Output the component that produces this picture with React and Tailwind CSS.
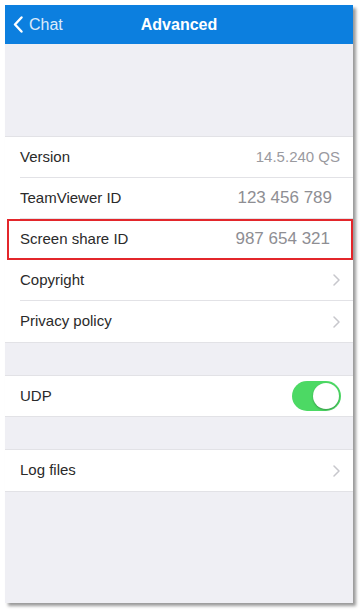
import React from 'react'

function Chevron() {
    return (
        <svg width="7" height="12" viewBox="0 0 7 12" className="shrink-0">
            <polyline points="1,1 6,6 1,11" fill="none" stroke="#c7c7cc" strokeWidth="1.5" strokeLinecap="round" strokeLinejoin="round" />
        </svg>
    )
}

function Row({ label, value, valueClass, chevron, last, children }) {
    return (
        <div className="h-[41px] flex items-center pl-[15px]">
            <div className={`flex-1 h-full flex items-center pr-[13px] ${last ? '' : 'border-b border-[#e2e2e6]'}`}>
                <span className="flex-1 text-[15px] text-[#2a2a2a]">{label}</span>
                {value && <span className={valueClass}>{value}</span>}
                {chevron && <Chevron />}
                {children}
            </div>
        </div>
    )
}

export default function App() {
    return (
        <div className="w-[363px] h-[612px] bg-white pt-[5px] pl-[5px]" style={{ fontFamily: '"Liberation Sans", Arial, sans-serif' }}>
            <div className="w-[348px] h-[598px] bg-[#efeff4] flex flex-col shadow-[3px_3px_3px_rgba(0,0,0,0.4)]">
                {/* Header */}
                <div className="h-[39px] bg-[#0c7fdf] relative flex items-center justify-center shrink-0">
                    <div className="absolute left-[8px] top-0 h-full flex items-center gap-[6px] text-white">
                        <svg width="10" height="17" viewBox="0 0 10 17">
                            <polyline points="8.5,1.5 2,8.5 8.5,15.5" fill="none" stroke="white" strokeWidth="2.4" strokeLinecap="round" strokeLinejoin="round" />
                        </svg>
                        <span className="text-[16px] opacity-85">Chat</span>
                    </div>
                    <span className="text-white text-[16px] font-bold">Advanced</span>
                </div>

                <div className="h-[93px] shrink-0 border-b border-[#e2e2e6]" />

                <div className="bg-white">
                    <Row label="Version" value="14.5.240 QS" valueClass="text-[15px] text-[#9a9a9f]" />
                    <Row label="TeamViewer ID" value="123 456 789" valueClass="text-[17px] text-[#8e8e93] mr-[8px]" />
                    <div className="relative">
                        <Row label="Screen share ID" value="987 654 321" valueClass="text-[17px] text-[#8e8e93] mr-[10px]" />
                        <div className="absolute top-0 bottom-0 left-[2px] right-0 border-2 border-[#e3262b]" />
                    </div>
                    <Row label="Copyright" chevron />
                    <Row label="Privacy policy" chevron last />
                </div>

                <div className="h-[34px] shrink-0 border-y border-[#e2e2e6]" />

                <div className="bg-white">
                    <div className="h-[40px] flex items-center pl-[15px] pr-[12px]">
                        <span className="flex-1 text-[15px] text-[#2a2a2a]">UDP</span>
                        <div className="w-[49px] h-[30px] rounded-full bg-[#4cd964] relative">
                            <div className="absolute right-[2px] top-[2px] w-[26px] h-[26px] rounded-full bg-white shadow-[0_1px_2px_rgba(0,0,0,0.3)]" />
                        </div>
                    </div>
                </div>

                <div className="h-[34px] shrink-0 border-y border-[#e2e2e6]" />

                <div className="bg-white border-b border-[#e2e2e6]">
                    <Row label="Log files" chevron last />
                </div>
            </div>
        </div>
    )
}
